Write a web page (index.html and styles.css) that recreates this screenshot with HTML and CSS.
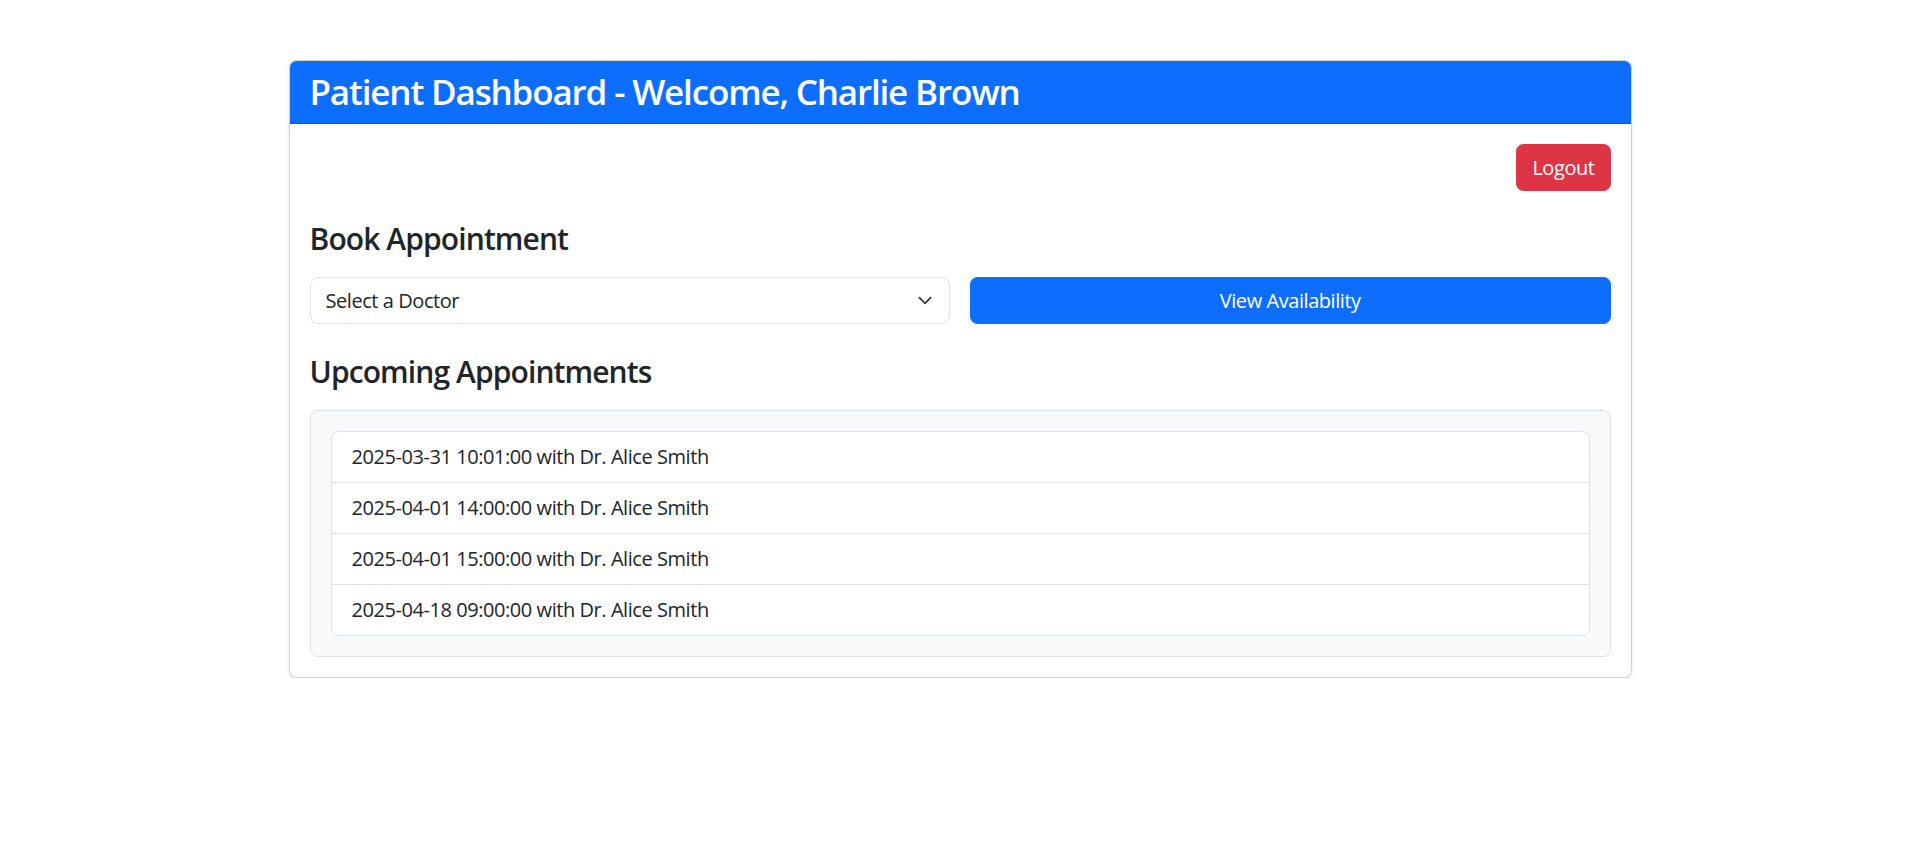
FILE: index.html
```html
<!DOCTYPE html>
<html lang="en">
<head>
<meta charset="utf-8">
<title>Patient Dashboard</title>
<link rel="stylesheet" href="styles.css">
</head>
<body>
<div class="card">
  <div class="card-header">
    <h3 class="title">Patient Dashboard - Welcome, Charlie Brown</h3>
  </div>
  <div class="card-body">
    <div class="toolbar">
      <button class="btn btn-danger" type="button">Logout</button>
    </div>
    <h4 class="section-title">Book Appointment</h4>
    <div class="booking">
      <div class="select-wrap">
        <select class="select">
          <option>Select a Doctor</option>
        </select>
        <svg class="chevron" viewBox="0 0 16 16" width="20" height="15" aria-hidden="true"><path d="M2 5l6 6 6-6" fill="none" stroke="#343a40" stroke-width="2" stroke-linecap="round" stroke-linejoin="round"/></svg>
      </div>
      <button class="btn btn-primary btn-block" type="button">View Availability</button>
    </div>
    <h4 class="section-title">Upcoming Appointments</h4>
    <div class="appointments">
      <ul class="list">
        <li class="list-item">2025-03-31 10:01:00 with Dr. Alice Smith</li>
        <li class="list-item">2025-04-01 14:00:00 with Dr. Alice Smith</li>
        <li class="list-item">2025-04-01 15:00:00 with Dr. Alice Smith</li>
        <li class="list-item">2025-04-18 09:00:00 with Dr. Alice Smith</li>
      </ul>
    </div>
  </div>
</div>
</body>
</html>
```
FILE: styles.css
```css
* { box-sizing: border-box; }
body {
  margin: 0;
  font-family: "Open Sans", "Noto Sans", sans-serif;
  font-size: 20px;
  line-height: 1.5;
  letter-spacing: -0.022em;
  color: #212529;
  background: #fff;
}
.card {
  width: 1343px;
  margin: 60px auto 0;
  border: 1px solid rgba(0,0,0,.175);
  border-radius: 7.5px;
  box-shadow: 0 2.5px 5px rgba(0,0,0,.075);
  background: #fff;
}
.card-header {
  background: #0d6efd;
  color: #fff;
  padding: 10px 20px;
  border-bottom: 1px solid rgba(0,0,0,.175);
  border-radius: 6.5px 6.5px 0 0;
}
.title {
  margin: 0;
  font-size: 35px;
  line-height: 42px;
  font-weight: 600;
  letter-spacing: -0.033em;
}
.card-body { padding: 20px; }
.toolbar {
  display: flex;
  justify-content: flex-end;
  margin-bottom: 30px;
}
.btn {
  font-family: inherit;
  font-size: 20px;
  line-height: 30px;
  letter-spacing: inherit;
  padding: 7.5px 15px;
  border: 1px solid transparent;
  border-radius: 7.5px;
  color: #fff;
  cursor: pointer;
}
.btn-danger { background: #dc3545; border-color: #dc3545; }
.btn-primary { background: #0d6efd; border-color: #0d6efd; }
.btn-block { width: 100%; }
.section-title {
  margin: 0 0 20px;
  font-size: 30px;
  line-height: 36px;
  font-weight: 600;
  letter-spacing: -0.03em;
}
.booking {
  display: grid;
  grid-template-columns: 1fr 1fr;
  gap: 20px;
  margin-bottom: 30px;
}
.select-wrap { position: relative; }
.select {
  width: 100%;
  height: 47px;
  appearance: none;
  -webkit-appearance: none;
  font-family: inherit;
  font-size: 20px;
  line-height: 30px;
  letter-spacing: inherit;
  color: #212529;
  background: #fff;
  padding: 7.5px 45px 7.5px 15px;
  border: 1px solid #dee2e6;
  border-radius: 7.5px;
}
.chevron {
  position: absolute;
  right: 15px;
  top: 16px;
  pointer-events: none;
}
.appointments {
  background: #f8f9fa;
  border: 1px solid #dee2e6;
  border-radius: 7.5px;
  padding: 20px;
}
.list {
  list-style: none;
  margin: 0;
  padding: 0;
  border: 1px solid #dee2e6;
  border-radius: 7.5px;
  background: #fff;
}
.list-item {
  padding: 10px 20px;
  line-height: 30px;
  border-bottom: 1px solid #dee2e6;
}
.list-item:last-child { border-bottom: 0; }
```
